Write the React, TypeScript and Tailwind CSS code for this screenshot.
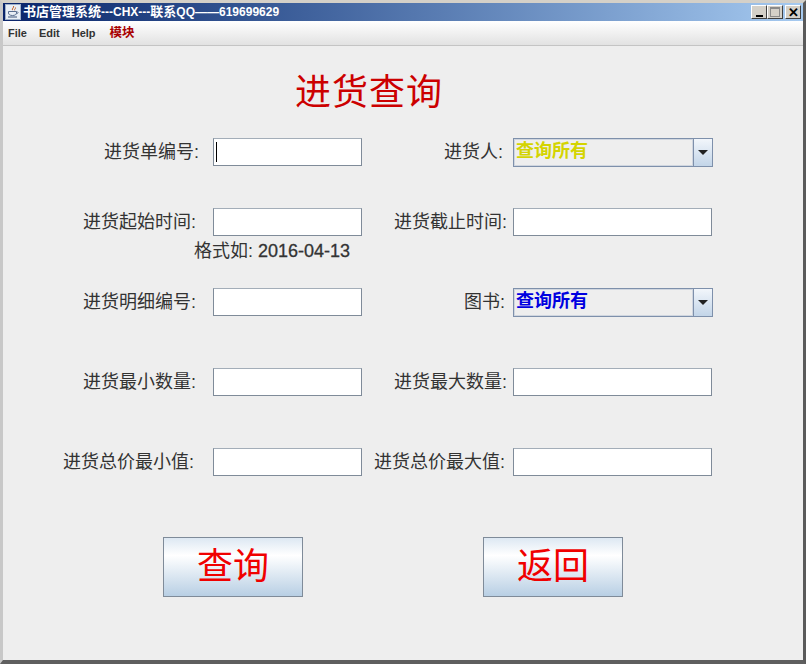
const cjk = "font-['Liberation_Sans','Noto_Sans_CJK_SC',sans-serif]"

function JavaIcon() {
  return (
    <svg width="16" height="16" viewBox="0 0 16 16" className="shrink-0">
      <rect x="0.5" y="0.5" width="15" height="15" fill="#e8eef6" stroke="#9fb0c8" />
      <path d="M8.5 2c1 1.5-2 2.5-1 4.2M10.5 3.5c.6 1-1.5 1.7-.8 2.9" fill="none" stroke="#c8642a" strokeWidth="1" />
      <path d="M3.5 7.5h8v1.5c0 1.5-1.5 2.5-4 2.5s-4-1-4-2.5z" fill="none" stroke="#5a6f90" strokeWidth="1" />
      <path d="M11.5 8h1.2c.8 0 .8 1.6-1.2 1.8" fill="none" stroke="#5a6f90" strokeWidth="0.8" />
      <path d="M3 13h9" stroke="#5a6f90" strokeWidth="1.2" />
    </svg>
  )
}

function WinButton({ children }: { children: React.ReactNode }) {
  return (
    <div className="flex h-[14px] w-[16px] items-center justify-center border border-t-white border-l-white border-r-[#404040] border-b-[#404040] bg-[#d4d0c8]">
      {children}
    </div>
  )
}

function Label({ text, className }: { text: string; className: string }) {
  return <div className={`flex justify-end whitespace-nowrap text-[18px] leading-[28px] text-[#333333] ${className}`}>{text}</div>
}

function TextBox({ width, caret }: { width: string; caret?: boolean }) {
  return (
    <div className={`flex h-[28px] items-center border border-[#7f8b99] border-t-[#a3adb8] bg-white pl-[2px] ${width}`}>
      {caret && <div className="h-[20px] w-[1px] bg-black" />}
    </div>
  )
}

function Combo({ color }: { color: string }) {
  return (
    <div className="flex h-[29px] w-[200px] border border-[#7e90ab] bg-[#eeeeee]">
      <div className={`flex-1 border border-[#d0d6df] pl-[1px] pt-[1px] text-[18px] font-bold leading-[20px] ${color}`}>查询所有</div>
      <div className="flex w-[19px] items-center justify-center border-l border-[#7e90ab] bg-gradient-to-b from-[#f2f6fb] to-[#c3d5e8]">
        <div className="h-0 w-0 border-x-[5px] border-t-[5px] border-x-transparent border-t-[#222222]" />
      </div>
    </div>
  )
}

function BigButton({ text }: { text: string }) {
  return (
    <button className="h-[60px] w-[140px] border border-[#7f8b99] bg-[linear-gradient(to_bottom,#dde8f3_0%,#ffffff_30%,#b8cfe4_100%)] text-[36px] leading-[56px] text-[#f00000]">
      {text}
    </button>
  )
}

export default function App() {
  return (
    <div className={`flex h-[664px] w-[806px] flex-col overflow-hidden border-x-[3px] border-t-[3px] border-b-[4px] border-l-[#c8c8c8] border-r-[#5a5a5a] border-t-[#d4d0c8] border-b-[#5f5f5f] bg-[#eeeeee] ${cjk}`}>
      {/* Title bar */}
      <div className="flex h-[18px] shrink-0 items-center bg-gradient-to-r from-[#0a246a] to-[#a6caf0] pl-[2px] pr-[2px]">
        <JavaIcon />
        <div className="ml-[2px] flex-1 whitespace-nowrap text-[13px] font-bold leading-[18px] text-white">
          书店管理系统<span className="text-[12px]">---CHX---</span>联系<span className="text-[12px]">QQ——619699629</span>
        </div>
        <div className="flex items-center">
          <WinButton>
            <div className="mt-[7px] h-[2px] w-[7px] bg-black" />
          </WinButton>
          <WinButton>
            <div className="h-[10px] w-[10px] border border-[#8a8a8a] border-t-2" />
          </WinButton>
          <div className="ml-[2px]">
            <WinButton>
              <span className="text-[13px] font-bold leading-none text-black">✕</span>
            </WinButton>
          </div>
        </div>
      </div>

      {/* Menu */}
      <div className="flex h-[25px] shrink-0 items-center gap-[12px] border-b border-[#c4c4c4] bg-gradient-to-b from-[#ffffff] to-[#e2e2e2] pl-[5px] text-[11px] font-bold text-[#333333]">
        <span>File</span>
        <span>Edit</span>
        <span>Help</span>
        <span className="ml-[2px] text-[12.5px] text-[#a80000]">模块</span>
      </div>

      {/* Form */}
      <div className="flex flex-1 flex-col">
        <div className="ml-[292px] mt-[22px] text-[36px] leading-[50px] tracking-[1px] text-[#cc0000]">进货查询</div>

        <div className="mt-[20px] flex">
          <Label text="进货单编号:" className="w-[196px]" />
          <div className="ml-[14px]"><TextBox width="w-[149px]" caret /></div>
          <Label text="进货人:" className="w-[141px]" />
          <div className="ml-[10px]"><Combo color="text-[#d4d400]" /></div>
        </div>

        <div className="mt-[41px] flex">
          <Label text="进货起始时间:" className="w-[193px]" />
          <div className="ml-[17px]"><TextBox width="w-[149px]" /></div>
          <Label text="进货截止时间:" className="w-[145px]" />
          <div className="ml-[6px]"><TextBox width="w-[199px]" /></div>
        </div>
        <div className="ml-[191px] mt-[3px] text-[18px] leading-[24px] text-[#333333]">
          格式如: <span className="[-webkit-text-stroke:0.3px_#333333]">2016-04-13</span>
        </div>

        <div className="mt-[25px] flex">
          <Label text="进货明细编号:" className="w-[193px]" />
          <div className="ml-[17px]"><TextBox width="w-[149px]" /></div>
          <Label text="图书:" className="w-[143px]" />
          <div className="ml-[8px]"><Combo color="text-[#0000e0]" /></div>
        </div>

        <div className="mt-[51px] flex">
          <Label text="进货最小数量:" className="w-[193px]" />
          <div className="ml-[17px]"><TextBox width="w-[149px]" /></div>
          <Label text="进货最大数量:" className="w-[145px]" />
          <div className="ml-[6px]"><TextBox width="w-[199px]" /></div>
        </div>

        <div className="mt-[52px] flex">
          <Label text="进货总价最小值:" className="w-[191px]" />
          <div className="ml-[19px]"><TextBox width="w-[149px]" /></div>
          <Label text="进货总价最大值:" className="w-[143px]" />
          <div className="ml-[8px]"><TextBox width="w-[199px]" /></div>
        </div>

        <div className="ml-[160px] mt-[61px] flex gap-[180px]">
          <BigButton text="查询" />
          <BigButton text="返回" />
        </div>
      </div>
    </div>
  )
}
